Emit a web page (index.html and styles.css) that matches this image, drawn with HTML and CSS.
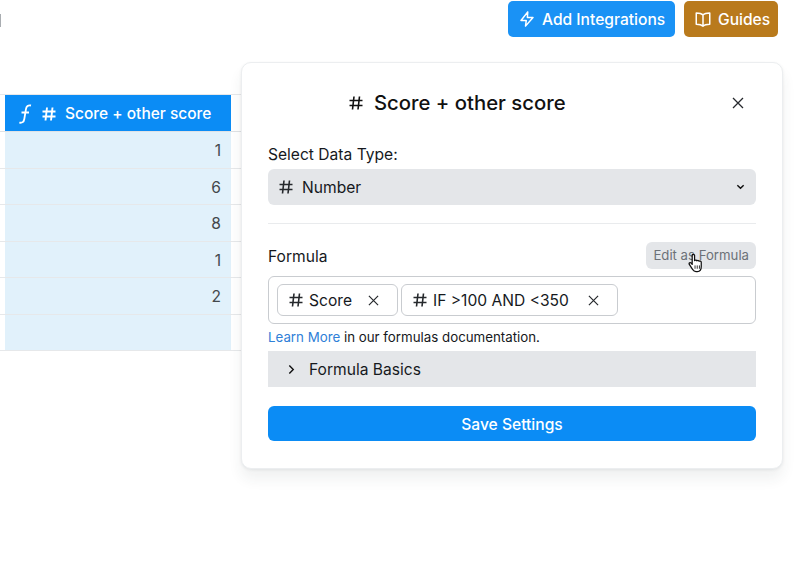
FILE: index.html
```html
<!DOCTYPE html>
<html lang="en">
<head>
  <meta charset="UTF-8">
  <meta name="viewport" content="width=device-width, initial-scale=1.0">
  <title>Formula Field Settings</title>
  <link rel="stylesheet" href="styles.css">
</head>
<body>
  <div class="topbar">
    <span class="edge-mark"></span>
    <div class="topbar-actions">
      <button class="top-btn top-btn-blue">
        <svg class="top-icon" viewBox="0 0 24 24"><path d="M13 2.5 4 14h7l-1 7.5L20 10h-7.5z"/></svg>
        Add Integrations
      </button>
      <button class="top-btn top-btn-brown">
        <svg class="top-icon" viewBox="0 0 24 24"><path d="M12 6.5C10.5 5 8 4 3 4v15c5 0 7.5 1 9 2.5 1.5-1.5 4-2.5 9-2.5V4c-5 0-7.5 1-9 2.5zM12 6.5v15"/></svg>
        Guides
      </button>
    </div>
  </div>

  <div class="sheet">
    <div class="sheet-row sheet-head">
      <div class="cell cell-head">
        <svg class="fx" viewBox="0 0 14 20"><path d="M13 1.5c-3-.6-4.6.8-5.1 3.800L6.300 15c-.5 3-2 4.200-5 3.600M3.500 8.500H11"/></svg>
        <svg class="hash hash-head" viewBox="0 0 16 16"><path d="M6 1.5 4.500 14.500M11.500 1.500 10 14.500M1.500 5.500h13M1.500 10.500h13"/></svg>
        Score + other score
      </div>
    </div>
    <div class="sheet-row"><div class="cell">1</div></div>
    <div class="sheet-row"><div class="cell">6</div></div>
    <div class="sheet-row"><div class="cell">8</div></div>
    <div class="sheet-row"><div class="cell">1</div></div>
    <div class="sheet-row"><div class="cell">2</div></div>
    <div class="sheet-row"><div class="cell"></div></div>
  </div>

  <div class="card">
    <div class="card-title">
      <svg class="hash hash-title" viewBox="0 0 16 16"><path d="M6 1.5 4.500 14.500M11.500 1.500 10 14.500M1.500 5.500h13M1.500 10.500h13"/></svg>
      Score + other score
      <svg class="close-icon" viewBox="0 0 12 12"><path d="M1 1l10 10M11 1 1 11"/></svg>
    </div>

    <div class="field-label">Select Data Type:</div>
    <div class="select">
      <svg class="hash" viewBox="0 0 16 16"><path d="M6 1.5 4.500 14.500M11.500 1.500 10 14.500M1.500 5.500h13M1.500 10.500h13"/></svg>
      <span class="select-text">Number</span>
      <svg class="chevron" viewBox="0 0 10 6"><path d="M1.500 1 5 4.500 8.500 1"/></svg>
    </div>

    <div class="divider"></div>

    <div class="formula-head">
      <span class="formula-label">Formula</span>
      <span class="edit-btn">Edit as Formula</span>
    </div>
    <div class="formula-box">
      <span class="chip chip-score">
        <svg class="hash" viewBox="0 0 16 16"><path d="M6 1.5 4.500 14.500M11.500 1.500 10 14.500M1.500 5.500h13M1.500 10.500h13"/></svg>
        Score
        <svg class="chip-x" viewBox="0 0 12 12"><path d="M1 1l10 10M11 1 1 11"/></svg>
      </span>
      <span class="chip chip-if">
        <svg class="hash" viewBox="0 0 16 16"><path d="M6 1.5 4.500 14.500M11.500 1.500 10 14.500M1.500 5.500h13M1.500 10.500h13"/></svg>
        IF &gt;100 AND &lt;350
        <svg class="chip-x" viewBox="0 0 12 12"><path d="M1 1l10 10M11 1 1 11"/></svg>
      </span>
    </div>
    <div class="help"><a class="help-link">Learn More</a> in our formulas documentation.</div>
    <div class="basics">
      <svg class="basics-arrow" viewBox="0 0 8 12"><path d="M1.500 1.500 6 6l-4.500 4.500"/></svg>
      Formula Basics
    </div>
    <button class="save-btn">Save Settings</button>

    <!-- mouse pointer over the edit button -->
    <svg class="pointer" viewBox="0 0 18 22">
      <path d="M5 2.500c0-1.500 2.500-1.500 2.500 0V8c1-.8 2-.6 2.500.2.8-.6 1.900-.4 2.300.4.9-.5 2.200 0 2.200 1.200v4.700c0 3-1.500 5-4 5H9c-1.800 0-2.800-1-3.600-2.300L2 12c-.8-1.500 1-2.500 2-1.300l1 1.300z"/>
      <path class="pointer-lines" d="M8 13v3.500M10.300 13v3.500M12.600 13v3.500"/>
    </svg>
  </div>
</body>
</html>
```

FILE: styles.css
```css
body {
  margin: 0;
  height: 576px;
  overflow: hidden;
  background: #fff;
  color: #16191d;
  font-family: Inter, "Liberation Sans", sans-serif;
  font-size: 15.6px;
}
button {
  border: none;
  font-family: inherit;
  cursor: pointer;
}

.topbar {
  display: flex;
  justify-content: space-between;
  align-items: flex-start;
  padding: 1px 22px 0 0;
  height: 57px;
}
.edge-mark {
  width: 1px;
  height: 13px;
  margin-top: 13px;
  background: #a9adb1;
}
.topbar-actions {
  display: flex;
  gap: 9px;
}
.top-btn {
  display: flex;
  align-items: center;
  gap: 6px;
  height: 36px;
  padding: 0 10px;
  border-radius: 5px;
  color: #fff;
  font-size: 15.6px;
  font-weight: 500;
  white-space: nowrap;
}
.top-btn-blue {
  width: 167px;
  background: #1a92f5;
}
.top-btn-brown {
  width: 94px;
  background: #b97a1c;
}
.top-icon {
  width: 18px;
  height: 18px;
  fill: none;
  stroke: #fff;
  stroke-width: 2;
  stroke-linejoin: round;
  stroke-linecap: round;
  flex-shrink: 0;
}

.sheet {
  width: 241px;
  margin-top: 36px;
  border-top: 1px solid #e6e8ea;
}
.sheet-row {
  height: 35.5px;
  padding-left: 5px;
  border-bottom: 1px solid #e6e8ea;
}
.sheet-head {
  height: 36px;
  border-bottom-color: #dfe2e5;
}
.cell {
  box-sizing: border-box;
  width: 226px;
  height: 100%;
  padding: 1px 10px 0;
  background: #e1f1fb;
  color: #44484c;
  font-size: 15.6px;
  line-height: 36px;
  text-align: right;
}
.cell-head {
  display: flex;
  align-items: center;
  padding: 1px 0 0 13px;
  background: #0b8cf5;
  color: #fff;
  font-size: 15.5px;
  font-weight: 500;
  text-align: left;
  white-space: nowrap;
}
.fx {
  width: 14px;
  height: 20px;
  margin-right: 9px;
  fill: none;
  stroke: #fff;
  stroke-width: 1.8;
  flex-shrink: 0;
}
.hash {
  width: 16px;
  height: 16px;
  fill: none;
  stroke: #26292d;
  stroke-width: 1.6;
  flex-shrink: 0;
}
.hash-head {
  margin-right: 8px;
  stroke: #fff;
  stroke-width: 1.9;
}

.card {
  position: absolute;
  left: 241px;
  top: 62px;
  box-sizing: border-box;
  width: 542px;
  height: 407px;
  padding: 0 26px;
  background: #fff;
  border: 1px solid #eceef0;
  border-radius: 10px;
  box-shadow: 0 10px 14px rgba(40, 50, 60, 0.07), 0 1px 3px rgba(40, 50, 60, 0.08);
}
.card-title {
  display: flex;
  align-items: center;
  box-sizing: border-box;
  height: 81px;
  padding-left: 80px;
  padding-bottom: 2px;
  color: #111;
  font-size: 20.3px;
  font-weight: 500;
}
.hash-title {
  margin-right: 10px;
  stroke: #111;
}
.close-icon {
  width: 12px;
  height: 12px;
  margin-left: auto;
  margin-right: 12px;
  fill: none;
  stroke: #26292d;
  stroke-width: 1.3;
}
.field-label {
  height: 25px;
  line-height: 22px;
}
.select {
  display: flex;
  align-items: center;
  height: 36px;
  padding: 0 11px 0 10px;
  box-sizing: border-box;
  background: #e4e6e9;
  border-radius: 6px;
}
.select-text {
  margin-left: 8px;
}
.chevron {
  width: 9px;
  height: 6px;
  margin-left: auto;
  fill: none;
  stroke: #111;
  stroke-width: 1.6;
}
.divider {
  height: 1px;
  margin: 18px 0;
  background: #e9ebed;
}
.formula-head {
  display: flex;
  justify-content: space-between;
  align-items: center;
  height: 27px;
}
.formula-label {
  padding-top: 1px;
}
.edit-btn {
  height: 27px;
  padding: 0 7px;
  background: #e4e6e9;
  border-radius: 6px;
  color: #6c7178;
  font-size: 13.2px;
  line-height: 26px;
}
.formula-box {
  display: flex;
  align-items: center;
  gap: 3px;
  box-sizing: border-box;
  height: 48px;
  margin-top: 7px;
  padding: 0 8px;
  border: 1px solid #c9ccd0;
  border-radius: 6px;
}
.chip {
  display: flex;
  align-items: center;
  box-sizing: border-box;
  height: 32px;
  padding: 0 11px 0 10px;
  border: 1px solid #c9ccd0;
  border-radius: 6px;
}
.chip .hash {
  margin-right: 5px;
}
.chip-score {
  width: 121px;
}
.chip-if {
  width: 217px;
}
.chip-x {
  width: 11px;
  height: 11px;
  margin-left: auto;
  margin-right: 7px;
  fill: none;
  stroke: #26292d;
  stroke-width: 1.3;
}
.help {
  height: 27px;
  font-size: 13.3px;
  line-height: 27px;
}
.help-link {
  color: #2f80d8;
}
.basics {
  display: flex;
  align-items: center;
  gap: 14px;
  height: 36px;
  padding-left: 20px;
  background: #e4e6e9;
}
.basics-arrow {
  width: 7px;
  height: 11px;
  fill: none;
  stroke: #111;
  stroke-width: 1.6;
}
.save-btn {
  display: block;
  width: 100%;
  height: 35px;
  margin-top: 19px;
  padding-top: 2px;
  background: #0b8cf5;
  border-radius: 6px;
  color: #fff;
  font-size: 15.6px;
  font-weight: 500;
}
.pointer {
  position: absolute;
  left: 445px;
  top: 190px;
  width: 18px;
  height: 21px;
  fill: #fff;
  stroke: #111;
  stroke-width: 1.3;
  stroke-linejoin: round;
}
.pointer-lines {
  fill: none;
  stroke-width: 0.9;
}
```
